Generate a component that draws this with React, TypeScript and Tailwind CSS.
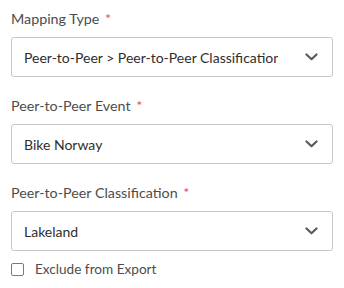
import React from "react";

const Chevron = () => (
  <svg width="13" height="8" viewBox="0 0 13 8" fill="none" className="shrink-0">
    <path d="M1.5 1.5L6.5 6.2L11.5 1.5" stroke="#5a5a5a" strokeWidth="2.2" strokeLinecap="round" strokeLinejoin="round" />
  </svg>
);

function Field({ label, value, className = "" }: { label: string; value: string; className?: string }) {
  return (
    <div className={className}>
      <div className="h-5 leading-5 text-[14.3px] text-[#4d4d4d] mb-2">
        {label} <span className="text-[#e0524a] ml-[2px]">*</span>
      </div>
      <div className="h-10 border border-[#c4c8cc] rounded-[3px] bg-white flex items-center pl-3 pr-[14px]">
        <div className="flex-1 overflow-hidden whitespace-nowrap text-[14px] text-[#2e2e2e] mr-[27px]">{value}</div>
        <Chevron />
      </div>
    </div>
  );
}

export default function App() {
  return (
    <div className="w-[344px] h-[288px] bg-white px-[11px] pt-[9px]" style={{ fontFamily: "Lato, 'Open Sans', sans-serif" }}>
      <Field label="Mapping Type" value="Peer-to-Peer > Peer-to-Peer Classification" />
      <Field label="Peer-to-Peer Event" value="Bike Norway" className="mt-[19px]" />
      <Field label="Peer-to-Peer Classification" value="Lakeland" className="mt-[19px]" />
      <label className="flex items-center mt-2 h-5 text-[13.6px] text-[#4d4d4d]">
        <span className="w-[13px] h-[13px] border border-[#7a7a7a] rounded-[2px] bg-white mr-[11px]" />
        Exclude from Export
      </label>
    </div>
  );
}
